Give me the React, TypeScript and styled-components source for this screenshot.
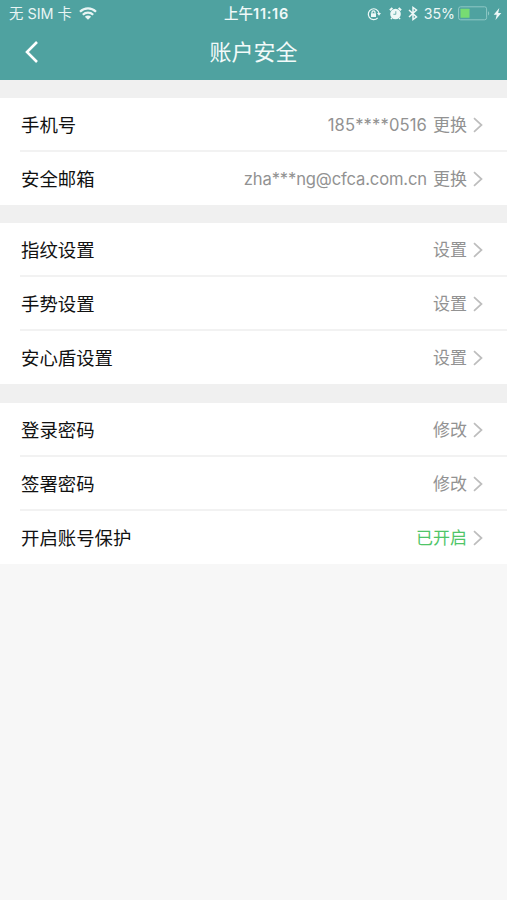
import React from "react";
import styled, { createGlobalStyle } from "styled-components";

const GlobalStyle = createGlobalStyle`
  * { box-sizing: border-box; }
  body {
    margin: 0;
    background: #f7f7f7;
    font-family: Inter, "Noto Sans CJK SC", sans-serif;
  }
`;

const Screen = styled.main`
  min-height: 900px;
  background: #f7f7f7;
`;

const Header = styled.header`
  height: 80px;
  background: #4fa2a0;
  color: #fff;
`;

const StatusBar = styled.div`
  display: grid;
  grid-template-columns: 1fr auto 1fr;
  align-items: center;
  height: 27px;
  padding: 0 5px 0 9px;
  font-size: 14.5px;
  line-height: 27px;
  white-space: nowrap;
`;

const Carrier = styled.div`
  display: flex;
  align-items: center;
  gap: 7px;
  font-size: 14.4px;
  color: #e9f5f4;
`;

const Clock = styled.div`
  padding-left: 2px;
  font-size: 14.5px;
  letter-spacing: 0.7px;
  font-weight: 600;
  color: #f0f9f8;
`;

const ClockPeriod = styled.span`
  letter-spacing: 0;
  font-weight: 500;
`;

const Indicators = styled.div`
  display: flex;
  align-items: center;
  justify-content: flex-end;
  color: #eef8f7;
`;

const Percent = styled.span`
  margin: 0 3px 0 6px;
  font-size: 14.2px;
`;

const Icon = styled.svg<{ $gap?: number }>`
  display: block;
  flex: none;
  margin-left: ${({ $gap = 0 }) => $gap}px;
`;

const NavBar = styled.div`
  display: grid;
  grid-template-columns: 60px 1fr 60px;
  align-items: center;
  height: 50px;
`;

const BackButton = styled.button`
  display: flex;
  width: 60px;
  height: 50px;
  padding: 0 0 0 23px;
  align-items: center;
  border: 0;
  background: none;
  color: #fff;
`;

const Title = styled.h1`
  margin: 0;
  font-size: 22px;
  font-weight: 400;
  line-height: 50px;
  text-align: center;
  color: #f2faf9;
`;

const Groups = styled.div`
  display: flex;
  flex-direction: column;
  gap: 18px;
  padding-top: 18px;
  background: #f0f0f0;
`;

const Group = styled.section`
  background: #fff;

  &:last-child {
    margin-top: 1px;
  }
`;

const Row = styled.div`
  display: flex;
  align-items: center;
  justify-content: space-between;
  height: 54px;
  margin-left: 20px;
  padding: 2px 24px 0 1px;
  border-bottom: 2px solid #f2f2f2;

  &:last-child {
    height: 53px;
    padding-top: 0;
    border-bottom: 0;
  }
`;

const Label = styled.span`
  font-size: 18.4px;
  line-height: 28px;
  color: #111;
`;

const Action = styled.div<{ $active?: boolean }>`
  display: flex;
  align-items: center;
  font-size: 17px;
  line-height: 28px;
  color: ${({ $active }) => ($active ? "#4fc568" : "#929292")};
`;

const Detail = styled.span<{ $spacing: number }>`
  margin-right: 6px;
  font-size: 16.6px;
  letter-spacing: ${({ $spacing }) => $spacing}px;
`;

type Item = {
  label: string;
  action: string;
  detail?: string;
  spacing?: number;
  active?: boolean;
};

const groups: Item[][] = [
  [
    { label: "手机号", detail: "185****0516", action: "更换", spacing: 0.12 },
    { label: "安全邮箱", detail: "zha***ng@cfca.com.cn", action: "更换", spacing: -0.15 },
  ],
  [
    { label: "指纹设置", action: "设置" },
    { label: "手势设置", action: "设置" },
    { label: "安心盾设置", action: "设置" },
  ],
  [
    { label: "登录密码", action: "修改" },
    { label: "签署密码", action: "修改" },
    { label: "开启账号保护", action: "已开启", active: true },
  ],
];

const WifiIcon = () => (
  <Icon width="18" height="13" viewBox="0 0 18 13" fill="none" stroke="currentColor" strokeWidth="2.2">
    <path d="M1 4.7C5.6.2 12.4.2 17 4.7M3.8 7.8c3-2.9 7.4-2.9 10.4 0" />
    <path d="M5.9 9.8a4.4 4.4 0 0 1 6.2 0L9 12.8Z" fill="currentColor" stroke="none" />
  </Icon>
);

const RotationLockIcon = () => (
  <Icon width="14" height="14" viewBox="0 0 14 14" fill="none" stroke="currentColor" strokeWidth="1.2">
    <path d="M10.7 10.8A5.4 5.4 0 1 1 12 6.2" />
    <path d="M10 6h4l-2 2.8Z" fill="currentColor" stroke="none" />
    <rect x="4" y="6.3" width="5" height="3.7" fill="currentColor" stroke="none" />
    <path d="M5 6.5V5.3a1.5 1.5 0 0 1 3 0v1.2" />
  </Icon>
);

const AlarmIcon = () => (
  <Icon $gap={8} width="13" height="13" viewBox="0 0 13 13" fill="none">
    <circle cx="6.5" cy="7" r="5.3" fill="currentColor" />
    <path d="M.9 3.3 3.4 1M9.6 1l2.5 2.3" stroke="currentColor" strokeWidth="1.9" />
    <path d="m2.9 10.9-1 1.2m8.2-1.2 1 1.2" stroke="currentColor" strokeWidth="1.4" />
    <path d="M6.8 4.2v3.1H4.4" stroke="#4fa2a0" strokeWidth=".8" />
  </Icon>
);

const BluetoothIcon = () => (
  <Icon $gap={6} width="10" height="15" viewBox="0 0 10 15" fill="none" stroke="currentColor" strokeWidth="1.5">
    <path d="m1 4 7.5 7L5 13.5v-12L8.5 4 1 11" />
  </Icon>
);

const BatteryIcon = () => (
  <Icon width="32" height="15" viewBox="0 0 32 15" fill="none">
    <rect x=".6" y=".8" width="28" height="13" rx="2" stroke="#8fc8c5" />
    <rect x="2.5" y="2.8" width="9" height="9" rx=".5" fill="#77dc72" />
    <path d="M30 5.2c1.6.7 1.6 3.6 0 4.3Z" fill="#8fc8c5" />
  </Icon>
);

const ChargingIcon = () => (
  <Icon $gap={3} width="9" height="12" viewBox="0 0 8 12" fill="currentColor">
    <path d="M5.8 0 .2 6.8h3L2 12l5.8-7H4.7Z" />
  </Icon>
);

const BackIcon = () => (
  <Icon width="16" height="24" viewBox="0 0 16 24" fill="none" stroke="currentColor" strokeWidth="2.6">
    <path d="M14 2 4 12l10 10" />
  </Icon>
);

const Chevron = () => (
  <Icon $gap={6} width="10" height="16" viewBox="0 0 10 16" fill="none" stroke="#bdbdbd" strokeWidth="1.7">
    <path d="m1 1.2 7.5 6.8L1 14.8" />
  </Icon>
);

export default function App() {
  return (
    <Screen>
      <GlobalStyle />
      <Header>
        <StatusBar>
          <Carrier>
            <span>无 SIM 卡</span>
            <WifiIcon />
          </Carrier>
          <Clock><ClockPeriod>上午</ClockPeriod>11:16</Clock>
          <Indicators>
            <RotationLockIcon />
            <AlarmIcon />
            <BluetoothIcon />
            <Percent>35%</Percent>
            <BatteryIcon />
            <ChargingIcon />
          </Indicators>
        </StatusBar>
        <NavBar>
          <BackButton aria-label="返回">
            <BackIcon />
          </BackButton>
          <Title>账户安全</Title>
        </NavBar>
      </Header>
      <Groups>
        {groups.map((items) => (
          <Group key={items[0].label}>
            {items.map((item) => (
              <Row key={item.label}>
                <Label>{item.label}</Label>
                <Action $active={item.active}>
                  {item.detail && <Detail $spacing={item.spacing ?? 0}>{item.detail}</Detail>}
                  <span>{item.action}</span>
                  <Chevron />
                </Action>
              </Row>
            ))}
          </Group>
        ))}
      </Groups>
    </Screen>
  );
}
